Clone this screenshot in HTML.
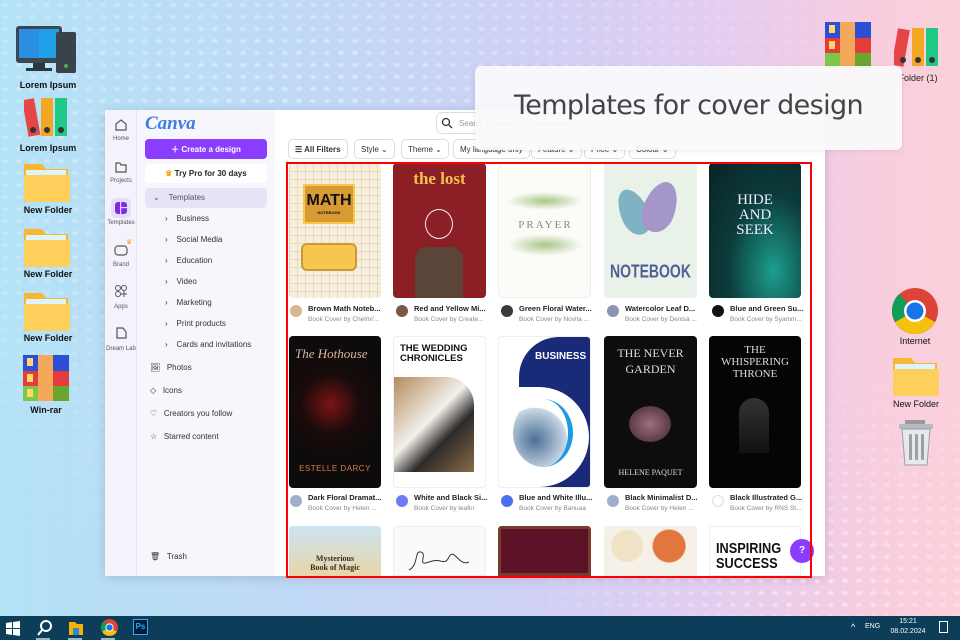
<!DOCTYPE html>
<html><head><meta charset="utf-8"><style>
*{margin:0;padding:0;box-sizing:border-box}
body{width:960px;height:640px;overflow:hidden;position:relative;font-family:"Liberation Sans",sans-serif;
background:linear-gradient(90deg,#b4e2f6 0%,#bfd9f7 30%,#cfd0f5 55%,#e4cdf0 75%,#f7cde0 90%,#fcd0da 100%)}
.a{position:absolute}
.lbl{position:absolute;font-size:9px;color:#111;text-align:center;width:80px;font-weight:bold}
.side div{position:absolute;font-size:8px;color:#333}
.rail div{position:absolute;width:32px;text-align:center;font-size:6px;color:#555}
.chip{position:absolute;top:139px;height:20px;border:1px solid #ddd;border-radius:5px;background:#fff;font-size:8px;color:#333;padding:5px 6px;white-space:nowrap}
.img{position:absolute;border-radius:4px;overflow:hidden}
.t1{position:absolute;font-size:7.5px;font-weight:bold;color:#222;white-space:nowrap;overflow:hidden;width:80px}
.t2{position:absolute;font-size:6.5px;color:#888;white-space:nowrap;overflow:hidden;width:80px}
.av{position:absolute;width:12px;height:12px;border-radius:50%}
</style></head><body>
<svg class="a" style="left:0;top:0" width="960" height="640">
<defs><pattern id="d" width="14" height="12" patternUnits="userSpaceOnUse"><ellipse cx="5" cy="5" rx="3" ry="2.2" fill="#fff"/></pattern>
<radialGradient id="g1" cx="0.3" cy="0.2" r="0.7"><stop offset="0" stop-color="#fff" stop-opacity=".4"/><stop offset="1" stop-color="#fff" stop-opacity="0"/></radialGradient>
<mask id="m1"><rect width="960" height="640" fill="url(#g1)"/></mask>
<radialGradient id="g2" cx="0.85" cy="0.9" r="0.35"><stop offset="0" stop-color="#fff" stop-opacity=".45"/><stop offset="1" stop-color="#fff" stop-opacity="0"/></radialGradient>
<mask id="m2"><rect width="960" height="640" fill="url(#g2)"/></mask></defs>
<rect x="0" y="0" width="960" height="640" fill="url(#d)" mask="url(#m1)"/>
<rect x="0" y="0" width="960" height="640" fill="url(#d)" mask="url(#m2)"/>
</svg>

<svg class="a" style="left:16px;top:26px" width="62" height="48"><rect x="0" y="0" width="46" height="37" rx="3" fill="#3b4650"/><rect x="3" y="3" width="40" height="29" fill="#1fa0e8"/><rect x="3" y="3" width="20" height="29" fill="#2a8fe0"/><rect x="17" y="37" width="12" height="6" fill="#2d3740"/><rect x="10" y="42" width="26" height="3" fill="#2d3740"/><rect x="40" y="6" width="20" height="41" rx="2" fill="#38434c"/><circle cx="50" cy="40" r="2" fill="#4caf50"/></svg>
<div class="lbl" style="left:8px;top:80px">Lorem Ipsum</div>
<svg class="a" style="left:24px;top:96px" width="46" height="42"><rect x="1" y="3" width="12" height="37" fill="#e64545" transform="rotate(-10 7 20)"/><rect x="17" y="2" width="12" height="38" fill="#f5a623"/><rect x="31" y="2" width="12" height="38" fill="#1dc985"/><circle cx="9" cy="34" r="3" fill="#333"/><circle cx="23" cy="34" r="3" fill="#333"/><circle cx="37" cy="34" r="3" fill="#333"/></svg>
<div class="lbl" style="left:8px;top:143px">Lorem Ipsum</div>
<svg class="a" style="left:24px;top:160px" width="46" height="42"><path d="M0 4h18l4 5h22v33H0z" fill="#f7b731"/><rect x="2" y="10" width="40" height="6" fill="#dff3fb"/><rect x="0" y="15" width="46" height="27" rx="2" fill="#ffcf5c"/></svg>
<div class="lbl" style="left:8px;top:205px">New Folder</div>
<svg class="a" style="left:24px;top:225px" width="46" height="42"><path d="M0 4h18l4 5h22v33H0z" fill="#f7b731"/><rect x="2" y="10" width="40" height="6" fill="#dff3fb"/><rect x="0" y="15" width="46" height="27" rx="2" fill="#ffcf5c"/></svg>
<div class="lbl" style="left:8px;top:269px">New Folder</div>
<svg class="a" style="left:24px;top:289px" width="46" height="42"><path d="M0 4h18l4 5h22v33H0z" fill="#f7b731"/><rect x="2" y="10" width="40" height="6" fill="#dff3fb"/><rect x="0" y="15" width="46" height="27" rx="2" fill="#ffcf5c"/></svg>
<div class="lbl" style="left:8px;top:333px">New Folder</div>
<svg class="a" style="left:23px;top:355px" width="46" height="46"><rect x="0" y="0" width="15" height="16" fill="#2c4fd6"/><rect x="15" y="0" width="15" height="46" fill="#f4a85a"/><rect x="30" y="0" width="16" height="16" fill="#2c4fd6"/><rect x="0" y="16" width="15" height="15" fill="#e53b3b"/><rect x="30" y="16" width="16" height="15" fill="#e53b3b"/><rect x="0" y="31" width="15" height="15" fill="#7cc94a"/><rect x="30" y="31" width="16" height="15" fill="#6aa62e"/><rect x="4" y="3" width="6" height="8" fill="#ffd86b"/><rect x="4" y="19" width="6" height="8" fill="#ffd86b"/><rect x="4" y="34" width="6" height="8" fill="#ffd86b"/></svg>
<div class="lbl" style="left:6px;top:405px">Win-rar</div>

<svg class="a" style="left:825px;top:22px" width="46" height="46"><rect x="0" y="0" width="15" height="16" fill="#2c4fd6"/><rect x="15" y="0" width="15" height="46" fill="#f4a85a"/><rect x="30" y="0" width="16" height="16" fill="#2c4fd6"/><rect x="0" y="16" width="15" height="15" fill="#e53b3b"/><rect x="30" y="16" width="16" height="15" fill="#e53b3b"/><rect x="0" y="31" width="15" height="15" fill="#7cc94a"/><rect x="30" y="31" width="16" height="15" fill="#6aa62e"/><rect x="4" y="3" width="6" height="8" fill="#ffd86b"/><rect x="4" y="19" width="6" height="8" fill="#ffd86b"/></svg>
<div class="lbl" style="left:808px;top:73px;font-weight:normal;color:#bbb">Win-rar</div>
<svg class="a" style="left:894px;top:26px" width="46" height="42"><rect x="1" y="3" width="12" height="37" fill="#e64545" transform="rotate(10 7 20)"/><rect x="18" y="2" width="12" height="38" fill="#f5a623"/><rect x="32" y="2" width="12" height="38" fill="#1dc985"/><circle cx="9" cy="34" r="3" fill="#333"/><circle cx="24" cy="34" r="3" fill="#333"/><circle cx="38" cy="34" r="3" fill="#333"/></svg>
<div class="lbl" style="left:878px;top:73px;font-weight:normal;color:#222">Folder (1)</div>
<svg class="a" style="left:892px;top:288px" width="46" height="46" viewBox="0 0 46 46"><circle cx="23" cy="23" r="23" fill="#db4437"/><path d="M23 23L3 34A23 23 0 0 0 23 46Z" fill="#f4c20d"/><path d="M23 23L23 46A23 23 0 0 0 43 34Z" fill="#f4c20d"/><path d="M23 23L3 34A23 23 0 0 1 7 6Z" fill="#0f9d58"/><circle cx="23" cy="23" r="11" fill="#fff"/><circle cx="23" cy="23" r="8.5" fill="#1a73e8"/></svg>
<div class="lbl" style="left:875px;top:336px;font-weight:normal;color:#111">Internet</div>
<svg class="a" style="left:893px;top:354px" width="46" height="42"><path d="M0 4h18l4 5h22v33H0z" fill="#f7b731"/><rect x="2" y="10" width="40" height="6" fill="#dff3fb"/><rect x="0" y="15" width="46" height="27" rx="2" fill="#ffcf5c"/></svg>
<div class="lbl" style="left:876px;top:399px;font-weight:normal;color:#111">New Folder</div>
<svg class="a" style="left:897px;top:420px" width="40" height="46"><rect x="8" y="0" width="20" height="4" fill="#999"/><rect x="2" y="4" width="34" height="5" rx="1" fill="#b5b9c0"/><path d="M5 9h28l-3 36H8z" fill="#e6e8ec" stroke="#9aa0a8"/><rect x="12" y="14" width="3" height="26" rx="1" fill="#9aa0a8"/><rect x="18" y="14" width="3" height="26" rx="1" fill="#9aa0a8"/><rect x="24" y="14" width="3" height="26" rx="1" fill="#9aa0a8"/></svg>

<div class="a" style="left:105px;top:110px;width:720px;height:466px;background:#fff;box-shadow:0 2px 10px rgba(0,0,0,.15)"></div>
<div class="a rail" style="left:105px;top:110px;width:32px;height:466px;background:#f4f2fb;border-right:1px solid #e6e4ef">
<svg class="a" style="left:9px;top:8px" width="14" height="14"><path d="M2 6L7 2l5 4v6H2z" fill="none" stroke="#555" stroke-width="1.2"/></svg><div style="top:26px">Home</div>
<svg class="a" style="left:9px;top:50px" width="14" height="14"><path d="M2 3h4l1 2h5v7H2z" fill="none" stroke="#555" stroke-width="1.2"/></svg><div style="top:68px">Projects</div>
<div style="left:6px;top:88px;width:20px;height:20px;background:#e4dcf9;border-radius:5px"></div>
<svg class="a" style="left:9px;top:91px" width="14" height="14"><rect x="1" y="1" width="12" height="12" rx="3" fill="#7d2ae8"/><rect x="6" y="1" width="1.2" height="12" fill="#e4dcf9"/><rect x="6" y="6" width="7" height="1.2" fill="#e4dcf9"/></svg><div style="top:110px">Templates</div>
<svg class="a" style="left:9px;top:133px" width="14" height="14"><rect x="1" y="3" width="12" height="9" rx="3" fill="none" stroke="#555" stroke-width="1.2"/></svg><div style="top:152px">Brand</div>
<div style="left:21px;top:128px;color:#f4a623;font-size:7px;width:auto">♛</div>
<svg class="a" style="left:9px;top:174px" width="14" height="14"><circle cx="4" cy="4" r="2.5" fill="none" stroke="#555"/><circle cx="10" cy="4" r="2.5" fill="none" stroke="#555"/><circle cx="4" cy="10" r="2.5" fill="none" stroke="#555"/><path d="M10 7v6M7 10h6" stroke="#555"/></svg><div style="top:194px">Apps</div>
<svg class="a" style="left:9px;top:216px" width="14" height="14"><path d="M3 2h6l3 4v6H3z" fill="none" stroke="#555" stroke-width="1.2"/></svg><div style="top:236px">Dream Lab</div>
</div>
<div class="a side" style="left:137px;top:110px;width:138px;height:466px;background:#f7f6fc">
<div style="left:8px;top:3px;font-family:'Liberation Serif',serif;font-style:italic;font-size:19px;color:#3b7fe0;font-weight:bold">Canva</div>
<div style="left:8px;top:29px;width:122px;height:20px;background:#8b3dff;border-radius:4px;color:#fff;font-weight:bold;text-align:center;padding-top:5px">＋ Create a design</div>
<div style="left:8px;top:54px;width:122px;height:19px;background:#fff;border-radius:4px;color:#222;font-weight:bold;text-align:center;padding-top:5px"><span style="color:#f4a623">♛</span> Try Pro for 30 days</div>
<div style="left:8px;top:78px;width:122px;height:20px;background:#e8e3f8;border-radius:4px;color:#555;padding:5px 0 0 8px">⌄ &nbsp;&nbsp;&nbsp;Templates</div>
<div style="left:28px;top:104px">›&nbsp;&nbsp;&nbsp;&nbsp;Business</div>
<div style="left:28px;top:125px">›&nbsp;&nbsp;&nbsp;&nbsp;Social Media</div>
<div style="left:28px;top:146px">›&nbsp;&nbsp;&nbsp;&nbsp;Education</div>
<div style="left:28px;top:167px">›&nbsp;&nbsp;&nbsp;&nbsp;Video</div>
<div style="left:28px;top:188px">›&nbsp;&nbsp;&nbsp;&nbsp;Marketing</div>
<div style="left:28px;top:209px">›&nbsp;&nbsp;&nbsp;&nbsp;Print products</div>
<div style="left:28px;top:230px">›&nbsp;&nbsp;&nbsp;&nbsp;Cards and invitations</div>
<div style="left:13px;top:253px">🖼&nbsp;&nbsp;&nbsp;Photos</div>
<div style="left:13px;top:276px">◇&nbsp;&nbsp;&nbsp;Icons</div>
<div style="left:13px;top:299px">♡&nbsp;&nbsp;&nbsp;Creators you follow</div>
<div style="left:13px;top:322px">☆&nbsp;&nbsp;&nbsp;Starred content</div>
<div style="left:13px;top:442px">🗑&nbsp;&nbsp;&nbsp;Trash</div>
</div>
<div class="a" style="left:436px;top:112px;width:185px;height:22px;border:1px solid #ddd;border-radius:6px;background:#fff;font-size:8px;color:#999;padding:6px 0 0 22px">Search thousands of templates</div>
<svg class="a" style="left:441px;top:117px" width="12" height="12"><circle cx="5" cy="5" r="3.5" fill="none" stroke="#333" stroke-width="1.3"/><path d="M8 8l3 3" stroke="#333" stroke-width="1.3"/></svg>
<div class="chip" style="left:288px;font-weight:bold">☰ All Filters</div>
<div class="chip" style="left:354px">Style ⌄</div>
<div class="chip" style="left:401px">Theme ⌄</div>
<div class="chip" style="left:453px">My language only</div>
<div class="chip" style="left:531px">Feature ⌄</div>
<div class="chip" style="left:584px">Price ⌄</div>
<div class="chip" style="left:629px">Colour ⌄</div>

<div class="img" style="left:289px;top:163px;width:92px;height:135px;background:#f7eedc;background-image:linear-gradient(#e8d9c3 1px,transparent 1px),linear-gradient(90deg,#e8d9c3 1px,transparent 1px);background-size:8px 8px">
<div class="a" style="left:14px;top:21px;width:52px;height:40px;background:#d89a32;border:2px solid #f5c84a;text-align:center;font-weight:900;font-size:16px;padding-top:6px;color:#111">MATH<div style="font-size:4px">NOTEBOOK</div></div>
<div class="a" style="left:12px;top:80px;width:56px;height:28px;background:#f7c64e;border:2px solid #c99a35;border-radius:6px"></div></div>
<div class="img" style="left:393px;top:163px;width:93px;height:135px;background:#8c1f25">
<div class="a" style="left:0;top:6px;width:93px;text-align:center;font-family:'Liberation Serif',serif;font-weight:bold;font-size:17px;color:#f0c44c">the lost</div>
<div class="a" style="left:32px;top:46px;width:28px;height:30px;border:1px solid #eee;border-radius:50%"></div>
<div class="a" style="left:22px;top:84px;width:48px;height:51px;background:#5a4538;border-radius:12px 12px 0 0"></div></div>
<div class="img" style="left:498px;top:163px;width:93px;height:135px;background:#fbfbf8;border:1px solid #eee">
<div class="a" style="left:8px;top:28px;width:76px;height:18px;background:radial-gradient(ellipse,#a8c78a,transparent 70%)"></div>
<div class="a" style="left:0;top:55px;width:93px;text-align:center;font-family:'Liberation Serif',serif;font-size:11px;letter-spacing:2px;color:#888">PRAYER</div>
<div class="a" style="left:8px;top:70px;width:76px;height:22px;background:radial-gradient(ellipse,#a8c78a,transparent 70%)"></div></div>
<div class="img" style="left:604px;top:163px;width:93px;height:135px;background:#e9f2e8">
<div class="a" style="left:16px;top:25px;width:28px;height:48px;background:#7fb3c4;border-radius:50%/60% 60% 40% 40%;transform:rotate(-25deg)"></div>
<div class="a" style="left:40px;top:18px;width:32px;height:52px;background:#a596c8;border-radius:50%/60% 60% 40% 40%;transform:rotate(20deg)"></div>
<div class="a" style="left:0;top:100px;width:93px;text-align:center;font-weight:bold;font-size:14px;color:#525f96;transform:scaleY(1.3)">NOTEBOOK</div></div>
<div class="img" style="left:709px;top:163px;width:92px;height:135px;background:radial-gradient(ellipse at 70% 80%,#1d9e8f,#0c3b3b 50%,#0a2324)">
<div class="a" style="left:0;top:30px;width:92px;text-align:center;font-family:'Liberation Serif',serif;font-size:15px;line-height:15px;color:#eef">HIDE<br>AND<br>SEEK</div></div>

<div class="av" style="left:290px;top:305px;background:#d4b78a"></div><div class="t1" style="left:308px;top:304px">Brown Math Noteb...</div><div class="t2" style="left:308px;top:316px">Book Cover by Chelmi'...</div>
<div class="av" style="left:396px;top:305px;background:#7a5a45"></div><div class="t1" style="left:414px;top:304px">Red and Yellow Mi...</div><div class="t2" style="left:414px;top:316px">Book Cover by Create...</div>
<div class="av" style="left:501px;top:305px;background:#3a3a3a"></div><div class="t1" style="left:519px;top:304px">Green Floral Water...</div><div class="t2" style="left:519px;top:316px">Book Cover by Novita ...</div>
<div class="av" style="left:607px;top:305px;background:#8b94b0"></div><div class="t1" style="left:625px;top:304px">Watercolor Leaf D...</div><div class="t2" style="left:625px;top:316px">Book Cover by Denisa ...</div>
<div class="av" style="left:712px;top:305px;background:#111"></div><div class="t1" style="left:730px;top:304px">Blue and Green Su...</div><div class="t2" style="left:730px;top:316px">Book Cover by Syamm...</div>

<div class="img" style="left:289px;top:336px;width:92px;height:152px;background:radial-gradient(circle at 45% 45%,#7a1414,#1a0b0b 30%,#0d0b0b 60%)">
<div class="a" style="left:6px;top:10px;font-family:'Liberation Serif',serif;font-style:italic;font-size:13px;color:#d8b9a0">The Hothouse</div>
<div class="a" style="left:0;top:128px;width:92px;text-align:center;font-size:8px;color:#d97a4a;letter-spacing:.5px">ESTELLE DARCY</div></div>
<div class="img" style="left:393px;top:336px;width:93px;height:152px;background:#fff;border:1px solid #eee">
<div class="a" style="left:6px;top:7px;font-weight:900;font-size:9.5px;line-height:10px;color:#111">THE WEDDING<br>CHRONICLES</div>
<div class="a" style="left:0;top:40px;width:80px;height:95px;background:linear-gradient(135deg,#b38b5c,#f4f0ea 45%,#2c2a2a 65%,#8a6b48);border-radius:0 28px 0 0"></div></div>
<div class="img" style="left:498px;top:336px;width:93px;height:152px;background:#fff;border:1px solid #eee">
<div class="a" style="left:20px;top:0;width:73px;height:152px;background:#182a78;border-radius:40px 0 0 0"></div>
<div class="a" style="left:12px;top:50px;width:78px;height:100px;background:#fff;border-radius:0 50px 50px 0"></div>
<div class="a" style="left:14px;top:62px;width:60px;height:68px;border-radius:50%;border-right:5px solid #1e9be0;background:radial-gradient(circle at 40% 60%,#4b6f94,#c9d8e6 60%,#fff 62%)"></div>
<div class="a" style="left:36px;top:14px;font-weight:900;font-size:10px;color:#fff">BUSINESS</div></div>
<div class="img" style="left:604px;top:336px;width:93px;height:152px;background:#0c0d0c">
<div class="a" style="left:0;top:9px;width:93px;text-align:center;font-family:'Liberation Serif',serif;font-size:12px;line-height:16px;color:#ddd">THE NEVER<br>GARDEN</div>
<div class="a" style="left:25px;top:70px;width:42px;height:36px;border-radius:50%;background:radial-gradient(#a06e7d,#5c3a48 70%,transparent 72%)"></div>
<div class="a" style="left:0;top:132px;width:93px;text-align:center;font-family:'Liberation Serif',serif;font-size:8px;color:#ddd">HELENE PAQUET</div></div>
<div class="img" style="left:709px;top:336px;width:92px;height:152px;background:#050505">
<div class="a" style="left:0;top:8px;width:92px;text-align:center;font-family:'Liberation Serif',serif;font-size:11px;line-height:12px;color:#ddd">THE<br>WHISPERING<br>THRONE</div>
<div class="a" style="left:30px;top:62px;width:30px;height:55px;background:linear-gradient(#333,#111);border-radius:15px 15px 0 0"></div></div>

<div class="av" style="left:290px;top:495px;background:#9db0c7"></div><div class="t1" style="left:308px;top:493px">Dark Floral Dramat...</div><div class="t2" style="left:308px;top:505px">Book Cover by Helen ...</div>
<div class="av" style="left:396px;top:495px;background:#6d7df2"></div><div class="t1" style="left:414px;top:493px">White and Black Si...</div><div class="t2" style="left:414px;top:505px">Book Cover by leafin</div>
<div class="av" style="left:501px;top:495px;background:#4a6ff0"></div><div class="t1" style="left:519px;top:493px">Blue and White Illu...</div><div class="t2" style="left:519px;top:505px">Book Cover by Banuaa</div>
<div class="av" style="left:607px;top:495px;background:#9db0c7"></div><div class="t1" style="left:625px;top:493px">Black Minimalist D...</div><div class="t2" style="left:625px;top:505px">Book Cover by Helen ...</div>
<div class="av" style="left:712px;top:495px;background:#fff;border:1px solid #ddd"></div><div class="t1" style="left:730px;top:493px">Black Illustrated G...</div><div class="t2" style="left:730px;top:505px">Book Cover by RNS St...</div>

<div class="img" style="left:289px;top:526px;width:92px;height:50px;background:linear-gradient(#cde3f2,#e8d6a8);border-radius:4px 4px 0 0"><div class="a" style="left:10px;top:28px;font-family:'Liberation Serif',serif;font-weight:bold;font-size:8px;line-height:9px;color:#3b2a1a;text-align:center;width:72px">Mysterious<br>Book of Magic</div></div>
<div class="img" style="left:393px;top:526px;width:93px;height:50px;background:#fafafa;border:1px solid #eee;border-radius:4px 4px 0 0"><svg class="a" style="left:10px;top:18px" width="70" height="30"><path d="M5 25c10-5 5-20 12-18s-5 15 8 10 15 5 20-5 10 10 20 5" fill="none" stroke="#333"/></svg></div>
<div class="img" style="left:498px;top:526px;width:93px;height:50px;background:#5b1126;border-radius:4px 4px 0 0;box-shadow:inset 0 0 0 3px #7b3a2a"></div>
<div class="img" style="left:604px;top:526px;width:93px;height:50px;background:radial-gradient(circle at 25% 40%,#f0e2c4 20%,transparent 22%),radial-gradient(circle at 70% 40%,#e2763d 22%,transparent 24%),#f5f1e8;border-radius:4px 4px 0 0"></div>
<div class="img" style="left:709px;top:526px;width:92px;height:50px;background:#fff;border:1px solid #eee;border-radius:4px 4px 0 0"><div class="a" style="left:6px;top:14px;font-weight:900;font-size:15px;line-height:15px;color:#111;transform:scaleX(.85);transform-origin:left">INSPIRING<br>SUCCESS</div></div>
<div class="a" style="left:790px;top:539px;width:24px;height:24px;border-radius:50%;background:#8b3dff;color:#fff;font-size:10px;font-weight:bold;text-align:center;line-height:24px">?</div>

<div class="a" style="left:286px;top:162px;width:526px;height:416px;border:2.5px solid #f00"></div>

<div class="a" style="left:475px;top:66px;width:427px;height:84px;background:rgba(250,250,252,.93);border-radius:6px;box-shadow:0 1px 6px rgba(0,0,0,.08);font-size:27px;color:#444;text-align:center;line-height:80px;font-family:'DejaVu Sans','Liberation Sans',sans-serif;letter-spacing:-.6px">Templates for cover design</div>

<div class="a" style="left:0;top:616px;width:960px;height:24px;background:#0d3d58"></div>
<svg class="a" style="left:5px;top:620px" width="16" height="16"><path d="M1 3l6-1v6H1zM8 2l7-1v7H8zM1 9h6v6l-6-1zM8 9h7v7l-7-1z" fill="#fff"/></svg>
<svg class="a" style="left:37px;top:619px" width="16" height="18"><circle cx="9" cy="7" r="5" fill="none" stroke="#fff" stroke-width="2"/><path d="M5 11l-4 5" stroke="#fff" stroke-width="2"/></svg>
<svg class="a" style="left:68px;top:620px" width="16" height="16"><path d="M1 2h6l2 2h6v11H1z" fill="#f4b400"/><rect x="5" y="8" width="6" height="7" fill="#2d8ad6"/></svg>
<svg class="a" style="left:101px;top:619px" width="17" height="17" viewBox="0 0 46 46"><circle cx="23" cy="23" r="23" fill="#db4437"/><path d="M23 23L3 34A23 23 0 0 0 43 34Z" fill="#f4c20d"/><path d="M23 23L3 34A23 23 0 0 1 7 6Z" fill="#0f9d58"/><circle cx="23" cy="23" r="11" fill="#fff"/><circle cx="23" cy="23" r="8.5" fill="#1a73e8"/></svg>
<div class="a" style="left:133px;top:619px;width:15px;height:16px;background:#001e36;border:1px solid #31a8ff;color:#31a8ff;font-size:8px;font-weight:bold;text-align:center;line-height:14px">Ps</div>
<div class="a" style="left:36px;top:638px;width:14px;height:2px;background:#9bb"></div>
<div class="a" style="left:68px;top:638px;width:14px;height:2px;background:#9bb"></div>
<div class="a" style="left:101px;top:638px;width:14px;height:2px;background:#9bb"></div>
<div class="a" style="left:851px;top:622px;color:#fff;font-size:9px">^</div>
<div class="a" style="left:865px;top:623px;color:#fff;font-size:7px">ENG</div>
<div class="a" style="left:888px;top:617px;color:#fff;font-size:7px;text-align:center;width:40px;line-height:10px">15:21<br>08.02.2024</div>
<div class="a" style="left:939px;top:621px;width:9px;height:12px;border:1px solid #fff"></div>
</body></html>
